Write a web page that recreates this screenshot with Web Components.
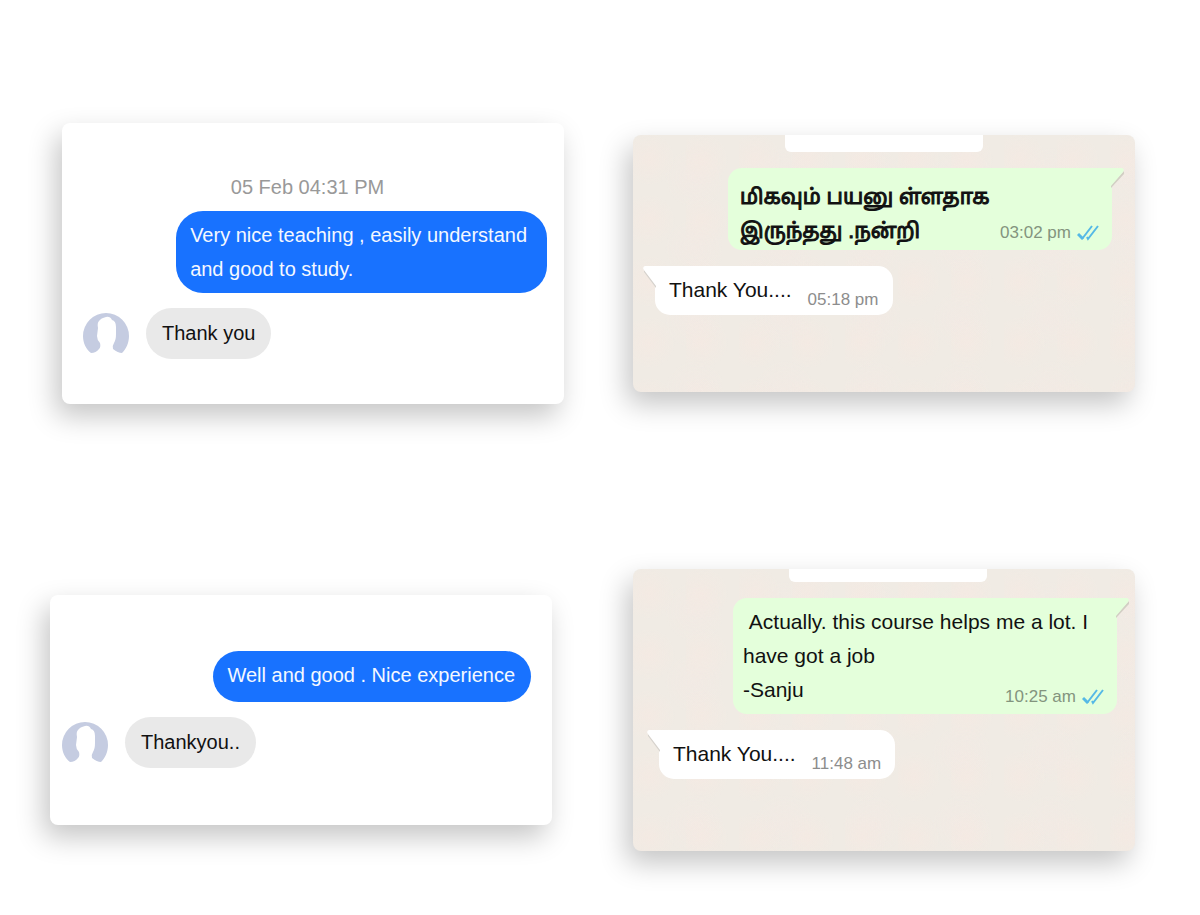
<!DOCTYPE html>
<html lang="en">
<head>
    <meta charset="UTF-8">
    <meta name="viewport" content="width=device-width, initial-scale=1.0">
    <title>Student feedback</title>
    <style>
        body {
            margin: 0;
            background-color: #fff;
            font-family: "Liberation Sans", Arial, "Noto Sans Tamil", "Noto Sans", sans-serif;
            --card-shadow: -6px 12px 28px rgba(0, 0, 0, 0.23);
        }
    </style>
</head>
<body>
    <feedback-wall>
        <feedback-row style="--row-left: 62px; --row-gap: 69px">
            <chat-card style="--pad: 50px 17px 45px 22px">
                <chat-date>05 Feb 04:31 PM</chat-date>
                <chat-bubble type="sent" style="--pad-right: 20px">Very nice teaching , easily understand<br>and good to study.</chat-bubble>
                <chat-bubble type="received">Thank you</chat-bubble>
            </chat-card>
            <wa-card style="--notch: 17px; --pad: 0 23px 77px 22px">
                <wa-bubble type="sent" time="03:02 pm" lang="ta">மிகவும் பயனு ள்ளதாக<br>இருந்தது .நன்றி</wa-bubble>
                <wa-bubble type="received" time="05:18 pm">Thank You....</wa-bubble>
            </wa-card>
        </feedback-row>
        <feedback-row style="--row-left: 50px; --row-gap: 81px">
            <chat-card style="--pad: 56px 21px 57px 13px">
                <chat-bubble type="sent" style="--pad-right: 16px">Well and good . Nice experience</chat-bubble>
                <chat-bubble type="received">Thankyou..</chat-bubble>
            </chat-card>
            <wa-card style="--notch: 13px; --pad: 0 18px 72px 26px">
                <wa-bubble type="sent" time="10:25 am">&nbsp;Actually. this course helps me a lot. I<br>have got a job<br>-Sanju</wa-bubble>
                <wa-bubble type="received" time="11:48 am">Thank You....</wa-bubble>
            </wa-card>
        </feedback-row>
    </feedback-wall>

    <script>
        class FeedbackWall extends HTMLElement {
            constructor() {
                super();
                this.attachShadow({ mode: 'open' });
            }

            connectedCallback() {
                this.shadowRoot.innerHTML = `
                    <style>
                        :host {
                            display: flex;
                            flex-direction: column;
                            gap: 165px;
                            padding: 123px 0 64px;
                        }
                    </style>
                    <slot></slot>
                `;
            }
        }
        customElements.define('feedback-wall', FeedbackWall);

        class FeedbackRow extends HTMLElement {
            constructor() {
                super();
                this.attachShadow({ mode: 'open' });
            }

            connectedCallback() {
                this.shadowRoot.innerHTML = `
                    <style>
                        :host {
                            display: grid;
                            grid-template-columns: 1fr 1fr;
                            align-items: center;
                            gap: var(--row-gap);
                            padding: 0 65px 0 var(--row-left);
                        }
                    </style>
                    <slot></slot>
                `;
            }
        }
        customElements.define('feedback-row', FeedbackRow);

        // Messenger style conversation
        class ChatCard extends HTMLElement {
            constructor() {
                super();
                this.attachShadow({ mode: 'open' });
            }

            connectedCallback() {
                this.shadowRoot.innerHTML = `
                    <style>
                        :host {
                            display: flex;
                            flex-direction: column;
                            gap: 15px;
                            padding: var(--pad);
                            border-radius: 8px;
                            background-color: #fff;
                            box-shadow: var(--card-shadow);
                        }
                    </style>
                    <slot></slot>
                `;
            }
        }
        customElements.define('chat-card', ChatCard);

        class ChatDate extends HTMLElement {
            constructor() {
                super();
                this.attachShadow({ mode: 'open' });
            }

            connectedCallback() {
                this.shadowRoot.innerHTML = `
                    <style>
                        :host {
                            display: block;
                            text-align: center;
                            font-size: 20px;
                            line-height: 28px;
                            padding-right: 16px;
                            margin-bottom: -5px;
                            color: #999;
                        }
                    </style>
                    <slot></slot>
                `;
            }
        }
        customElements.define('chat-date', ChatDate);

        class ChatBubble extends HTMLElement {
            constructor() {
                super();
                this.attachShadow({ mode: 'open' });
            }

            connectedCallback() {
                const received = this.getAttribute("type") === "received";

                const avatar = `
                    <svg width="46" height="46" viewBox="0 0 46 46" aria-hidden="true">
                        <path fill="#c5cce1" d="M8 40C3 36 0 30 0 23A23 23 0 0 1 46 23C46 30 43 36 39 40Q35 40 30 36Q29 33 31 30Q33 27 33 21V14Q33 8 29 7Q27 3 23 4Q18 5 16 8Q14 10 15 15L14 23Q14 27 17 30Q18 34 16 36Q13 40 8 40Z"/>
                    </svg>
                `;

                this.shadowRoot.innerHTML = `
                    <style>
                        :host {
                            display: flex;
                            align-items: flex-end;
                            justify-content: flex-end;
                            gap: 17px;
                        }

                        :host([type="received"]) {
                            justify-content: flex-start;
                        }

                        svg {
                            flex: none;
                            margin-left: -1px;
                        }

                        .bubble {
                            padding: 7px var(--pad-right, 14px) 7px 14px;
                            min-height: 37px;
                            border-radius: 27px;
                            background-color: #1872ff;
                            color: #f4f8ff;
                            font-size: 20px;
                            line-height: 34px;
                        }

                        :host([type="received"]) .bubble {
                            padding: 8px 16px 9px;
                            min-height: 0;
                            background-color: #e9e9e9;
                            color: #111;
                        }
                    </style>
                    ${received ? avatar : ''}
                    <div class="bubble"><slot></slot></div>
                `;
            }
        }
        customElements.define('chat-bubble', ChatBubble);

        // WhatsApp style conversation
        class WaCard extends HTMLElement {
            constructor() {
                super();
                this.attachShadow({ mode: 'open' });
            }

            connectedCallback() {
                this.shadowRoot.innerHTML = `
                    <style>
                        :host {
                            display: flex;
                            flex-direction: column;
                            gap: 16px;
                            padding: var(--pad);
                            border-radius: 8px;
                            background-color: #f0ebe4;
                            /* faint wallpaper blotches */
                            background-image:
                                radial-gradient(circle at 30% 40%, rgba(246, 233, 226, 0.6), transparent 50%),
                                radial-gradient(circle at 70% 60%, rgba(244, 233, 228, 0.5), transparent 40%);
                            background-size: 53px 61px, 89px 71px;
                            box-shadow: var(--card-shadow);
                        }

                        .notch {
                            align-self: center;
                            width: 198px;
                            height: var(--notch);
                            border-radius: 0 0 6px 6px;
                            background-color: #fff;
                        }
                    </style>
                    <div class="notch"></div>
                    <slot></slot>
                `;
            }
        }
        customElements.define('wa-card', WaCard);

        class WaBubble extends HTMLElement {
            constructor() {
                super();
                this.attachShadow({ mode: 'open' });
            }

            connectedCallback() {
                const time = this.getAttribute("time");
                const sent = this.getAttribute("type") === "sent";

                const tail = sent
                    ? `<svg class="tail" width="13" height="20" viewBox="0 0 13 20" aria-hidden="true">
                            <path fill="#d2cfc4" d="M0 20V17L13 3V6Z"/>
                            <path fill="#e4ffdb" d="M0 0H11Q14 1 12 4L0 18Z"/>
                        </svg>`
                    : `<svg class="tail" width="13" height="22" viewBox="0 0 13 22" aria-hidden="true">
                            <path fill="#d6d2cd" d="M13 22V19L1 4V6Z"/>
                            <path fill="#fff" d="M13 0H2Q-1 1 1 4L13 20Z"/>
                        </svg>`;

                const ticks = `
                    <svg width="22" height="16" viewBox="0 0 22 16" fill="none" stroke="#55b9e6" stroke-width="2" aria-hidden="true">
                        <path stroke-width="3" d="M1 9L6 14"/>
                        <path d="M5 14L15 1M10 12L11 14L21 1"/>
                    </svg>
                `;

                this.shadowRoot.innerHTML = `
                    <style>
                        :host {
                            display: grid;
                            position: relative;
                            align-self: flex-start;
                            grid-template-columns: auto auto;
                            column-gap: 16px;
                            padding: 7px 14px 8px;
                            border-radius: 0 15px 15px 15px;
                            background-color: #fff;
                            color: #111;
                            font-size: 21px;
                            line-height: 34px;
                        }

                        :host([type="sent"]) {
                            align-self: flex-end;
                            box-sizing: border-box;
                            width: 100%;
                            max-width: 384px;
                            grid-template-columns: 1fr;
                            padding: 7px 13px 7px 10px;
                            border-radius: 14px 0 14px 14px;
                            background-color: #e4ffdb;
                        }

                        .tail {
                            position: absolute;
                            top: 0;
                            right: 100%;
                            margin-right: -1px;
                        }

                        :host([type="sent"]) .tail {
                            right: auto;
                            left: 100%;
                            margin: 0 0 0 -1px;
                        }

                        .text,
                        .meta {
                            grid-row: 1;
                        }

                        :host([lang="ta"]) .text {
                            padding-left: 2px;
                            padding-top: 5px;
                            margin-bottom: -5px;
                            -webkit-text-stroke: 1px #111;
                        }

                        .meta {
                            display: flex;
                            align-items: center;
                            gap: 6px;
                            align-self: end;
                            justify-self: end;
                            margin-bottom: -3px;
                            font-size: 17px;
                            line-height: 20px;
                            color: #8d8d8d;
                        }

                        /* the time sits over the last line of the message */
                        :host([type="sent"]) .text,
                        :host([type="sent"]) .meta {
                            grid-column: 1;
                        }

                        :host([type="sent"]) .meta {
                            margin-bottom: 0;
                            color: #83947e;
                        }
                    </style>
                    ${tail}
                    <div class="text"><slot></slot></div>
                    <div class="meta"><time>${time}</time>${sent ? ticks : ''}</div>
                `;
            }
        }
        customElements.define('wa-bubble', WaBubble);
    </script>
</body>
</html>
